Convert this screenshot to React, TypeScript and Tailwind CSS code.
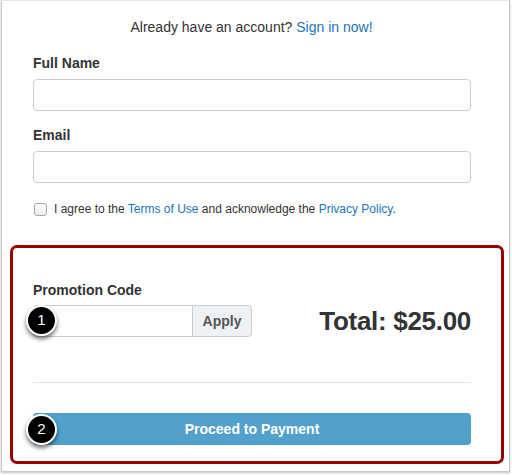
import React from 'react';

function Badge({ n, className }: { n: number; className: string }) {
  return (
    <div
      className={`absolute w-[31px] h-[31px] rounded-full bg-black border-2 border-white flex items-center justify-center text-white text-[15px] shadow-[0_3px_4px_rgba(0,0,0,0.55)] ${className}`}
    >
      {n}
    </div>
  );
}

export default function App() {
  return (
    <div className="w-[512px] h-[475px] bg-white font-['Liberation_Sans',Arial,sans-serif] text-[#333]">
      <div className="relative ml-px w-[509px] h-[472px] bg-white border border-[#c8c8c8] border-t-[#e6e6e6] shadow-[0_1px_2px_rgba(0,0,0,0.25)] flex flex-col">
        {/* top form */}
        <p className="mt-[16px] mr-[8px] text-center text-[14px] leading-5">
          Already have an account? <span className="text-[#1b74b8]">Sign in now!</span>
        </p>

        <div className="ml-[31px] w-[438px] flex flex-col">
          <label className="mt-[16px] text-[14px] leading-5 font-bold">Full Name</label>
          <div className="mt-[6px] h-[32px] rounded-[4px] border border-[#cccccc] bg-white" />

          <label className="mt-[14px] text-[14px] leading-5 font-bold">Email</label>
          <div className="mt-[6px] h-[32px] rounded-[4px] border border-[#cccccc] bg-white" />

          <div className="mt-[16px] flex items-center gap-[7px] text-[12px] leading-5">
            <span className="ml-px w-[13px] h-[13px] rounded-[3px] border border-[#a9a9a9] bg-gradient-to-b from-white to-[#ececec]" />
            <span>
              I agree to the <span className="text-[#1b74b8]">Terms of Use</span> and acknowledge the{' '}
              <span className="text-[#1b74b8]">Privacy Policy</span>.
            </span>
          </div>
        </div>

        {/* highlighted payment section */}
        <div className="mt-[26px] ml-[8px] w-[494px] h-[219px] rounded-[7px] border-[3px] border-[#9a0000] px-[20px] pt-[32px] flex flex-col">
          <label className="text-[14px] leading-5 font-bold">Promotion Code</label>
          <div className="mt-[5px] w-[438px] h-[32px] flex items-center justify-between">
            <div className="flex h-[32px]">
              <div className="w-[160px] rounded-l-[4px] border border-[#cccccc] bg-white" />
              <div className="w-[60px] -ml-px rounded-r-[4px] border border-[#cccccc] bg-[#eef1f4] flex items-center justify-center text-[14px] font-bold text-[#555]">
                Apply
              </div>
            </div>
            <div className="text-[26px] leading-8 font-bold text-[#333] tracking-[-0.3px]">Total: $25.00</div>
          </div>

          <div className="mt-[45px] w-[438px] h-px bg-[#e3e3e3]" />

          <div className="mt-[30px] w-[438px] h-[32px] rounded-[4px] bg-[#52a1cd] flex items-center justify-center text-white text-[14px] font-bold">
            Proceed to Payment
          </div>
        </div>

        <Badge n={1} className="left-[24px] top-[304px]" />
        <Badge n={2} className="left-[24px] top-[413px]" />
      </div>
    </div>
  );
}
